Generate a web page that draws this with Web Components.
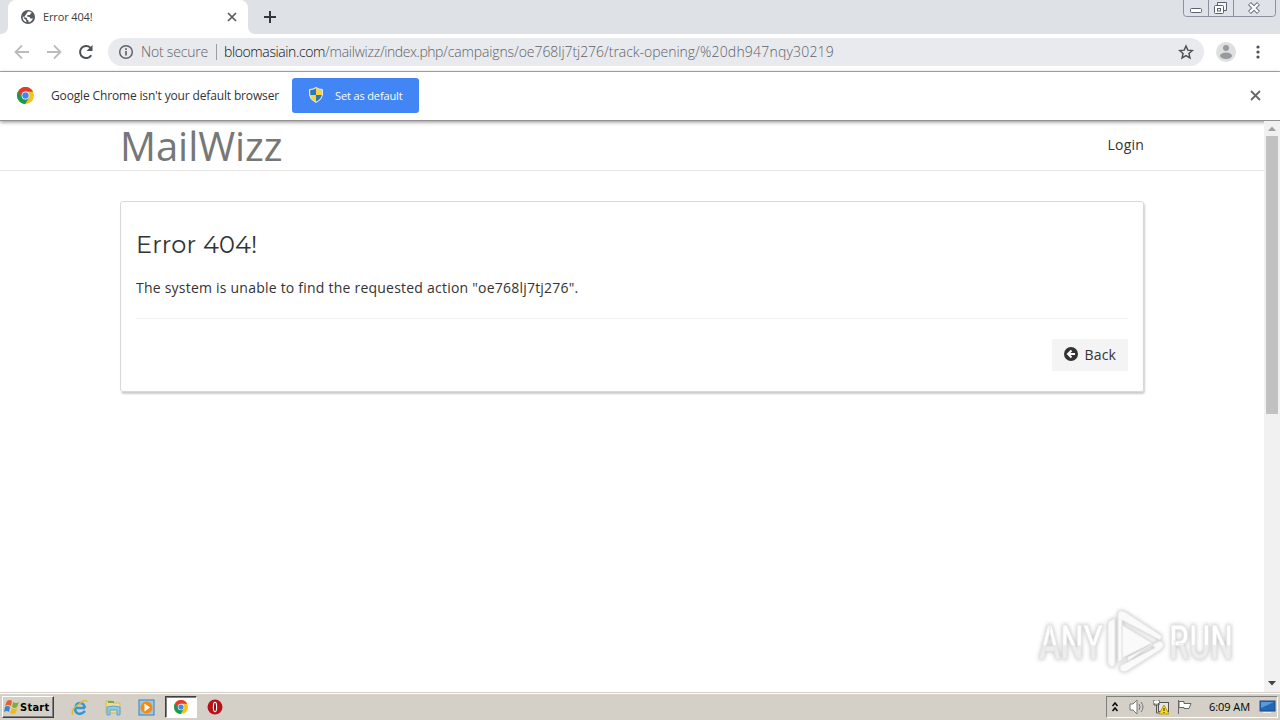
<!DOCTYPE html>
<html lang="en"><head><meta charset="utf-8"><title>Error 404!</title>
<style>html,body{margin:0;width:1280px;height:720px;overflow:hidden;background:#fff;font-family:"Open Sans","Noto Sans",sans-serif}</style></head>
<body><desktop-screen></desktop-screen>
<script>
const define=(name,html,after)=>customElements.define(name,class extends HTMLElement{
 connectedCallback(){if(this.shadowRoot)return;this.attachShadow({mode:'open'}).innerHTML=html;if(after)after(this)}
});
// Text run whose tracking is adjusted to a given advance width.
customElements.define('fit-text',class extends HTMLElement{
 connectedCallback(){
  if(!this.shadowRoot)this.attachShadow({mode:'open'}).innerHTML='<style>:host{display:inline-block;white-space:nowrap;flex:none}</style><slot></slot>';
  const w=+this.getAttribute('w'),n=this.textContent.length;
  const natural=this.getBoundingClientRect().width;
  this.style.letterSpacing=((w-natural)/n)+'px';
 }
});
define('chrome-logo',`<style>:host{display:block;width:17px;height:17px}svg{display:block;width:100%;height:100%}</style>
<svg viewBox="0 0 24 24"><circle cx="12" cy="12" r="12" fill="#fbc116"/><path d="M12 12 1.6 6A12 12 0 0 1 22.4 6L22.4 6.6H12Z" fill="#e33b2e"/><path d="M1.6 6A12 12 0 0 0 11.5 24L17 15 12 12 7 14Z" fill="#169b56"/><path d="M1.6 6 7 15 12 12 12 6.5Z" fill="#e33b2e"/><path d="M1.6 6 7 15 10 17.5 6 19A12 12 0 0 1 1.6 6" fill="#169b56"/><circle cx="12" cy="12" r="5.500" fill="#fff"/><circle cx="12" cy="12" r="4.500" fill="#4285f4"/></svg>`);
define('window-buttons',`<style>:host{display:block;width:94px;height:18px}svg{display:block}</style>
<svg width="94" height="18" fill="none" stroke="#8b919d"><path d="M.5 0V13.500Q.5 16.500 3.500 16.500H89.500Q92.500 16.500 92.500 13.500V0M25.500 0V16M50.500 0V16" fill="#dfe2e9"/><g stroke="#596070"><rect x="7.500" y="8.500" width="11" height="4" rx="1" fill="#fff"/><path d="M34.500 5V2.500H43.500V10.500H41" fill="#f5f6f8"/><rect x="31.500" y="5.500" width="9" height="8" rx="1" fill="#fff"/><rect x="34.500" y="8.500" width="3" height="2.500"/></g><path d="m66.500 3.500 9 9m0-9-9 9" stroke="#666d7b" stroke-width="4.200"/><path d="m67 4 8 8m0-8-8 8" stroke="#fff" stroke-width="2.400"/></svg>`);
define('tab-strip',`<style>:host{display:flex;height:34px;background:#dee1e6;align-items:flex-start}
.lead{width:8px;height:34px;background:#fff}.lead i{display:block;width:8px;height:34px;background:#dee1e6;border-radius:0 0 7px 0}
.tab{box-sizing:border-box;width:240px;height:34px;border-radius:8px 8px 0 0;background:#fff;display:flex;align-items:center;padding:0 11px 1px 13px;color:#3c4043;font-size:11px}
.tab fit-text{margin-left:8px}.tab .x{margin-left:auto}.trail{width:8px;height:34px;background:#fff}.trail i{display:block;width:8px;height:34px;background:#dee1e6;border-radius:0 0 0 7px}
.plus{margin:11px 0 0 8px}window-buttons{margin-left:auto;margin-right:3px}</style>
<span class="lead"><i></i></span><div class="tab"><svg width="14" height="14" viewBox="0 0 14 14"><circle cx="7" cy="7" r="7" fill="#56595d"/><path d="M7 1.600Q9.500 1.500 11 3L9.500 3.500 9 5H6.500L6 6.500 8.500 7 9.500 8.500H12Q10.500 12 7.500 12.300L7.500 10.500 6 9.500V8L1.700 6.500Q1.500 11 5.500 12.200L5 10 2.500 8" fill="#fff"/></svg><fit-text w="49.500">Error 404!</fit-text><svg class="x" width="10" height="10"><path d="m1 1 8 8m0-8-8 8" stroke="#55585c" stroke-width="1.700"/></svg></div><span class="trail"><i></i></span>
<svg class="plus" width="12" height="12"><path d="M6 0V12M0 6H12" stroke="#35383b" stroke-width="2"/></svg><window-buttons></window-buttons>`);
define('address-bar',`<style>:host{display:flex;align-items:center;box-sizing:border-box;width:1096px;height:28px;border-radius:14px;background:#e8eaed;padding:0 10px 1px;font-size:14px;font-weight:300;color:#5f6368}
.info{margin-right:7px}.sep{width:1px;height:16px;background:#9a9da1;margin:0 7px 0 8px}.dom{color:#111}.star{margin-left:auto}</style>
<svg class="info" width="16" height="16" fill="none"><circle cx="8" cy="8" r="6.300" stroke="#5f6368" stroke-width="1.500"/><path d="M8 7V11.500M8 4.300V6" stroke="#5f6368" stroke-width="1.700"/></svg><fit-text w="67">Not secure</fit-text><span class="sep"></span><fit-text class="dom" w="101">bloomasiain.com</fit-text><fit-text w="55">/mailwizz</fit-text><fit-text w="63">/index.php</fit-text><fit-text w="71">/campaigns</fit-text><fit-text w="90">/oe768lj7tj276</fit-text><fit-text w="91">/track-opening</fit-text><fit-text w="139">/%20dh947nqy30219</fit-text>
<svg class="star" width="16" height="16" viewBox="0 0 24 24"><path d="m12 3 2.700 6.200 6.700.6-5 4.500 1.500 6.600L12 17.500l-5.900 3.400 1.500-6.600-5-4.500 6.700-.6Z" fill="none" stroke="#4d5156" stroke-width="2.200"/></svg>`);
define('tool-bar',`<style>:host{display:flex;box-sizing:border-box;height:38px;padding:0 15px 1px 14px;align-items:center;background:#fff;border-bottom:1px solid #aeb0b2}
svg{flex:none}.f{margin-left:16px}.r{margin-left:15px}address-bar{margin-left:13px;flex:none}.p{margin-left:12px}.m{margin-left:auto;margin-right:5px}</style>
<svg width="16" height="16"><path d="M15 8H2M8 1.500 1.500 8 8 14.500" stroke="#b9bbbd" stroke-width="1.800" fill="none"/></svg><svg class="f" width="16" height="16"><path d="M1 8H14M8 1.500 14.500 8 8 14.500" stroke="#b9bbbd" stroke-width="1.800" fill="none"/></svg><svg class="r" width="18" height="18"><path d="M14.300 12.300A6.100 6.100 0 1 1 13.300 4.500" fill="none" stroke="#4d5156" stroke-width="2"/><path d="M15.500 2V8H9.500Z" fill="#4d5156"/></svg><address-bar></address-bar><svg class="p" width="20" height="20"><circle cx="10" cy="10" r="10" fill="#dfdfe0"/><circle cx="10" cy="6" r="3" fill="#979a9e"/><ellipse cx="10" cy="13.800" rx="6" ry="3.200" fill="#979a9e"/></svg><svg class="m" width="4" height="14"><circle cx="2" cy="2" r="1.600" fill="#4d5156"/><circle cx="2" cy="7" r="1.600" fill="#4d5156"/><circle cx="2" cy="12" r="1.600" fill="#4d5156"/></svg>`);
define('info-bar',`<style>:host{position:relative;display:flex;box-sizing:border-box;height:49px;align-items:center;padding:0 19px 1px 17px;background:#fff;border-bottom:1px solid #929292;box-shadow:0 1px 4px #0007;font-size:12px;color:#303336}
.msg{margin-left:17px}button{font:300 11px "Open Sans",sans-serif;background:#4285f4;color:#fff;border:0;border-radius:3px;width:127px;height:35px;display:flex;align-items:center;padding:0 0 1px 17px;margin-left:13px}button fit-text{margin-left:12px;font-weight:400}.x{margin-left:auto}</style>
<chrome-logo></chrome-logo><fit-text class="msg" w="228">Google Chrome isn't your default browser</fit-text><button><svg width="14" height="16" viewBox="0 0 14 16"><path d="M7 .5Q10 2.500 13.500 2.500V8Q13 12.500 7 15.500 1 12.500.5 8V2.500Q4 2.500 7 .5" fill="#f9d23c" stroke="#dce8f5"/><path d="M7 1.500V8H1.300V3.200Q4.500 3 7 1.500M7 8H12.700Q12 12 7 14.500" fill="#2878bd"/></svg><fit-text w="67.500">Set as default</fit-text></button><svg class="x" width="11" height="11"><path d="m1 1 9 9m0-9-9 9" stroke="#65686c" stroke-width="1.800"/></svg>`);
define('scroll-rail',`<style>:host{display:flex;flex-direction:column;width:16px;background:#f1f1f1;align-items:center}.thumb{width:12px;height:278px;background:#c1c1c1;margin-top:5px}.u{margin-top:5px}.d{margin:auto 0 6px}</style>
<svg class="u" width="8" height="5"><path d="M0 5 4 .5 8 5Z" fill="#a0a0a0"/></svg><i class="thumb"></i><svg class="d" width="8" height="5"><path d="M0 0 4 4.500 8 0Z" fill="#444"/></svg>`);
define('error-card',`<style>:host{display:block;box-sizing:border-box;width:1024px;height:191px;margin:30px 0 0 120px;border:1px solid #d8d8d8;border-radius:3px;box-shadow:1px 2px 2px #0003;padding:26px 15px 0;color:#333}
h1{margin:0;font:400 24px/34px Montserrat,Inter,sans-serif}p{margin:15px 0 0;font-size:14px;line-height:22px}hr{border:0;border-top:1px solid #f1f1f1;margin:19px 0 20px}.row{display:flex;justify-content:flex-end}button{display:flex;align-items:center;border:0;background:#f4f4f4;width:76px;height:32px;padding:0 12px 2px;font:14px "Open Sans",sans-serif;color:#333}button fit-text{margin-left:7px}</style>
<h1><fit-text w="121.500">Error 404!</fit-text></h1><p><fit-text w="442.500">The system is unable to find the requested action "oe768lj7tj276".</fit-text></p><hr><div class="row"><button><svg width="14" height="14"><circle cx="7" cy="7" r="7" fill="#333"/><path d="M11 7H5M7.500 3.500 4 7 7.500 10.500" fill="none" stroke="#fff" stroke-width="2"/></svg><fit-text w="31.500">Back</fit-text></button></div>`);
// Watermark lying over the lower right corner of the page.
define('any-run-mark',`<style>:host{position:absolute;right:-15px;bottom:13px;width:248px;height:72px;display:block}svg{display:block;filter:drop-shadow(0 0 2px #0004)}text{font:500 36px Roboto,sans-serif}</style>
<svg width="248" height="72" fill="#fefefe" stroke="#e6e6e6"><defs><linearGradient id="g" x2="0" y2="1"><stop offset=".55" stop-color="#fff"/><stop offset=".56" stop-color="#ededed"/></linearGradient></defs><g transform="scale(1 1.350)" stroke-width=".7"><text x="8" y="38.500" textLength="64" lengthAdjust="spacingAndGlyphs" fill="url(#g)">ANY</text><text x="138" y="38.500" textLength="64" lengthAdjust="spacingAndGlyphs" fill="url(#g)">RUN</text></g><path transform="translate(-1 0)" d="M82 13Q78 13 78 18V55Q78 59 82 60L85 58V11ZM88 7V55L92 53V13L130 33 132 29 95 5Q89 2 88 7ZM92 18V51L122 36ZM98 50 130 34Q137 37 130 43L97 64Q91 66 90 62V59L125 41 122 37 98 54Z" fill="#fafafa" stroke-linejoin="round"/></svg>`);
define('web-page',`<style>:host{position:relative;display:flex;height:571px}.content{flex:1;position:relative}header{display:flex;box-sizing:border-box;height:50px;border-bottom:1px solid #e7e7e7;padding:0 120px;justify-content:space-between;align-items:center}.brand{font-size:40px;line-height:48px;color:#777}.login{font-size:14px;color:#333;margin-bottom:2px}any-run-mark{z-index:1}</style>
<div class="content"><header><fit-text class="brand" w="162.500">MailWizz</fit-text><fit-text class="login" w="36.500">Login</fit-text></header><error-card></error-card><any-run-mark></any-run-mark></div><scroll-rail></scroll-rail>`);
define('task-bar',`<style>:host{display:flex;box-sizing:border-box;height:28px;background:#d4d0c8;border-top:1px solid #d4d0c8;box-shadow:inset 0 1px #fff;align-items:center;padding:1px 2px 0}
.start{box-sizing:border-box;width:52px;height:22px;border:1px solid;border-color:#fff #404040 #404040 #fff;box-shadow:inset -1px -1px #808080;display:flex;align-items:center;padding-left:1px;font:bold 11px "DejaVu Sans Condensed","DejaVu Sans",sans-serif;color:#000}
.ie{margin-left:17px}.fo{margin-left:17px}.wm{margin-left:16px}.act{box-sizing:border-box;width:32px;height:22px;margin-left:10px;border:1px solid;border-color:#404040 #fff #fff #404040;box-shadow:inset 1px 1px #808080;background:#fff;display:grid;place-items:center}.act chrome-logo{width:14px;height:14px}.op{margin-left:10px}
.tray{box-sizing:border-box;margin-left:auto;width:172px;height:22px;border:1px solid;border-color:#808080 #fff #fff #808080;display:flex;align-items:center;padding-left:5px;font-size:11px;color:#000}.tray svg{flex:none}.tray fit-text{margin:0 0 2px 16px}</style>
<div class="start"><svg width="16" height="16"><path d="M3 2Q6 0 8 2L7 7Q4 5 1 7Z" fill="#e5612c"/><path d="M9 3Q12 5 15 3L13 8Q11 10 8 8Z" fill="#80ad35"/><path d="M1 8Q4 6 6 8L5 13Q3 11 0 13Z" fill="#3b84c5"/><path d="M8 9Q10 11 13 9L12 14Q9 16 6 14Z" fill="#f1b91e"/></svg><fit-text w="29.500">Start</fit-text></div>
<svg class="ie" width="17" height="17"><path d="M14 9H4.500Q5 4 9 4T14 9M14 12Q10 16.500 6 14 3.500 12 4.500 9" fill="none" stroke="#3497d3" stroke-width="2.600"/><path d="M2 15.500Q-1 11 8 5 15-1 16 3" fill="none" stroke="#e5b72e" stroke-width="1.500"/></svg>
<svg class="fo" width="17" height="17"><path d="M1 2H6L8 4H15V14H1Z" fill="#f2dc8b" stroke="#d9b95c"/><path d="M3 3H9" stroke="#6cad53" stroke-width="2"/><path d="M2 8Q8 6 15 8V16H12V11H5V16H2Z" fill="#91c8e8" stroke="#5ba5ce"/></svg>
<svg class="wm" width="17" height="17"><rect x="1" y="1" width="15" height="15" fill="#9bc8e6" stroke="#3c80b7"/><circle cx="8.500" cy="8.500" r="6" fill="#f28a16"/><path d="M6.500 4.500 12 8.500 6.500 12.500Z" fill="#fff"/></svg>
<span class="act"><chrome-logo></chrome-logo></span>
<svg class="op" width="16" height="16"><circle cx="8" cy="8" r="7.500" fill="#ba1117"/><ellipse cx="8" cy="8" rx="2.200" ry="5.300" fill="#fff"/><ellipse cx="8" cy="8" rx="1" ry="4.300" fill="#841014"/></svg>
<div class="tray"><svg width="7" height="10" fill="none" stroke="#000" stroke-width="1.500"><path d="m.5 4 2.500-3 2.500 3M.5 9 3 6l2.500 3"/></svg><svg style="margin-left:10px" width="18" height="16" fill="none" stroke="#777"><path d="M1 5H4L8 1V15L4 11H1Z" fill="#fff"/><path d="M10 5Q12 8 10 11M12 3Q16 8 12 13"/></svg><svg style="margin-left:6px" width="18" height="16"><rect x="5.500" y="3.500" width="10" height="9" fill="#e5e5e5" stroke="#555"/><path d="M1 1V6H6V1M3.500 6V14H8" fill="none" stroke="#555"/><path d="M1 3H6" stroke="#fff" stroke-width="2"/><path d="m11 6 5 9H6Z" fill="#ffdd16" stroke="#bd9b00"/><path d="M11 9V12M11 13V14" stroke="#222"/></svg><svg style="margin-left:5px" width="17" height="16"><path d="M2.500 1V15M3 2.500H8V4.500H15L13 9.500H8V8.500H3Z" fill="#fff" stroke="#666"/></svg><fit-text w="41">6:09 AM</fit-text><svg style="margin-left:9px" width="17" height="14"><rect x="1" y="1" width="15" height="10" fill="#2467b2" stroke="#174d89"/><path d="M2 2H15L2 8Z" fill="#5a9ad9"/><path d="M4 12.500H12" stroke="#eee"/></svg></div>`);
define('desktop-screen',`<style>:host{display:block;width:1280px;height:720px;background:#fff}</style><tab-strip></tab-strip><tool-bar></tool-bar><info-bar></info-bar><web-page></web-page><task-bar></task-bar>`);
</script></body></html>
